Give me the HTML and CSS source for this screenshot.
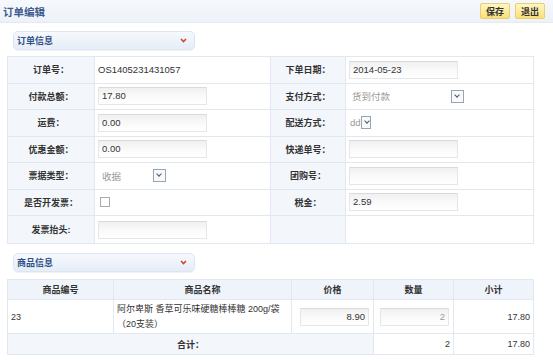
FILE: index.html
```html
<!DOCTYPE html>
<html lang="zh-CN">
<head>
<meta charset="UTF-8">
<title>订单编辑</title>
<link rel="stylesheet" href="styles.css">
</head>
<body>

<div class="topbar">
  <span class="title">订单编辑</span>
  <div class="actions">
    <button class="btn">保存</button>
    <button class="btn">退出</button>
  </div>
</div>

<div class="section-head">
  <span>订单信息</span>
  <svg class="chev" width="7" height="5" viewBox="0 0 7 5"><path d="M1 1 L3.5 3.5 L6 1" fill="none" stroke="#d9442c" stroke-width="1.6"/></svg>
</div>

<table class="form-table">
  <colgroup>
    <col style="width:87px"><col style="width:176px"><col style="width:75px"><col>
  </colgroup>
  <tr>
    <td class="lbl">订单号：</td>
    <td class="val">OS1405231431057</td>
    <td class="lbl">下单日期：</td>
    <td class="val"><div class="ipt">2014-05-23</div></td>
  </tr>
  <tr>
    <td class="lbl">付款总额：</td>
    <td class="val"><div class="ipt">17.80</div></td>
    <td class="lbl">支付方式：</td>
    <td class="val"><div class="sel sel-wide"><span>货到付款</span><i class="arrow"></i></div></td>
  </tr>
  <tr>
    <td class="lbl">运费：</td>
    <td class="val"><div class="ipt">0.00</div></td>
    <td class="lbl">配送方式：</td>
    <td class="val"><div class="sel sel-tiny"><span>dd</span><i class="arrow"></i></div></td>
  </tr>
  <tr>
    <td class="lbl">优惠金额：</td>
    <td class="val"><div class="ipt">0.00</div></td>
    <td class="lbl">快递单号：</td>
    <td class="val"><div class="ipt"></div></td>
  </tr>
  <tr>
    <td class="lbl">票据类型：</td>
    <td class="val"><div class="sel sel-short"><span>收据</span><i class="arrow"></i></div></td>
    <td class="lbl">团购号：</td>
    <td class="val"><div class="ipt"></div></td>
  </tr>
  <tr>
    <td class="lbl">是否开发票：</td>
    <td class="val"><span class="chk"></span></td>
    <td class="lbl">税金：</td>
    <td class="val"><div class="ipt">2.59</div></td>
  </tr>
  <tr class="last">
    <td class="lbl">发票抬头:</td>
    <td class="val"><div class="ipt"></div></td>
    <td class="lbl"></td>
    <td class="val"></td>
  </tr>
</table>

<div class="section-head second">
  <span>商品信息</span>
  <svg class="chev" width="7" height="5" viewBox="0 0 7 5"><path d="M1 1 L3.5 3.5 L6 1" fill="none" stroke="#d9442c" stroke-width="1.6"/></svg>
</div>

<table class="goods-table">
  <colgroup>
    <col style="width:106px"><col style="width:178px"><col style="width:82px"><col style="width:80px"><col>
  </colgroup>
  <tr class="head">
    <th>商品编号</th>
    <th>商品名称</th>
    <th>价格</th>
    <th>数量</th>
    <th>小计</th>
  </tr>
  <tr class="item">
    <td>23</td>
    <td class="name">阿尔卑斯 香草可乐味硬糖棒棒糖 200g/袋（20支装）</td>
    <td><div class="ipt num">8.90</div></td>
    <td><div class="ipt num dim">2</div></td>
    <td class="right">17.80</td>
  </tr>
  <tr class="total">
    <td colspan="3" class="sum">合计：</td>
    <td class="right white">2</td>
    <td class="right white">17.80</td>
  </tr>
</table>

</body>
</html>
```

FILE: styles.css
```css
body {
  margin: 0;
  background: #fff;
  color: #333;
  font-family: "Liberation Sans", "Noto Sans CJK SC", sans-serif;
  font-size: 9px;
}

.topbar {
  height: 22px;
  display: flex;
  align-items: center;
  justify-content: space-between;
  padding: 0 8px 0 3px;
  background: linear-gradient(#f5f8fc, #edf2f9);
  border-bottom: 1px solid #e3eaf3;
}

.title {
  font-size: 10.5px;
  font-weight: bold;
  color: #3d5c8c;
}

.actions {
  display: flex;
  gap: 5px;
}

.btn {
  width: 30px;
  height: 16px;
  padding: 0;
  font-family: inherit;
  font-size: 9px;
  font-weight: bold;
  color: #333;
  background: linear-gradient(#fff6c4, #f8e07a);
  border: 1px solid #e9cf6e;
  border-radius: 2px;
}

.section-head {
  width: 170px;
  height: 17px;
  margin: 8px 0 0 13px;
  padding: 0 7px 0 3px;
  display: flex;
  align-items: center;
  justify-content: space-between;
  background: linear-gradient(#f6f9fd, #e5edf7);
  border: 1px solid #dce5f0;
  border-radius: 5px;
  box-shadow: 0 1px 1px #eef2f7;
  font-weight: bold;
  color: #2e4f86;
}

.section-head.second {
  margin-top: 9px;
}

.form-table,
.goods-table {
  width: 527px;
  margin: 6px 0 0 7px;
  border-collapse: collapse;
  table-layout: fixed;
}

.goods-table {
  margin-top: 7px;
}

.form-table td,
.goods-table td,
.goods-table th {
  border: 1px solid #e1e8f1;
  padding: 0 3px;
}

.form-table tr {
  height: 26.5px;
}

.form-table tr.last {
  height: 28px;
}

.lbl {
  background: #f3f7fc;
  text-align: center;
  font-weight: bold;
  color: #333;
}

.val {
  font-size: 9.5px;
}

.ipt {
  width: 101px;
  height: 16px;
  line-height: 16px;
  padding: 0 3px;
  border: 1px solid #e6e6e6;
  border-top-color: #dadada;
  background: linear-gradient(#f0f0f0, #fbfbfb 60%, #fff);
  color: #333;
}

.sel {
  display: flex;
  align-items: center;
  justify-content: space-between;
  height: 16px;
  padding: 0 0 0 4px;
  color: #999;
  font-size: 9.5px;
}

.sel-wide { width: 112px; padding-left: 3px; }
.sel-short { width: 64px; }
.sel-tiny { width: 21px; padding-left: 1px; }

.arrow {
  width: 11px;
  height: 11px;
  border: 1px solid #9aa4b0;
  background: #f7f9fb;
  position: relative;
}

.arrow::after {
  content: "";
  position: absolute;
  left: 3px;
  top: 2px;
  width: 3px;
  height: 3px;
  border-right: 1px solid #4a5a6c;
  border-bottom: 1px solid #4a5a6c;
  transform: rotate(45deg);
}

.chk {
  display: block;
  width: 8px;
  height: 8px;
  margin-left: 2px;
  border: 1px solid #a9a9a9;
  background: #fff;
}

.goods-table th {
  height: 19px;
  background: #eff4fa;
  font-weight: bold;
}

.goods-table tr.item {
  height: 34px;
}

.goods-table .name {
  line-height: 15px;
}

.goods-table tr.total {
  height: 21px;
  background: #f3f7fc;
}

.goods-table .sum {
  text-align: center;
  font-weight: bold;
}

.right {
  text-align: right;
}

.white {
  background: #fff;
}

.ipt.num {
  width: 61px;
  margin-left: 5px;
  text-align: right;
  font-size: 9.5px;
}

.ipt.dim {
  color: #999;
  margin-left: 3px;
}
```
